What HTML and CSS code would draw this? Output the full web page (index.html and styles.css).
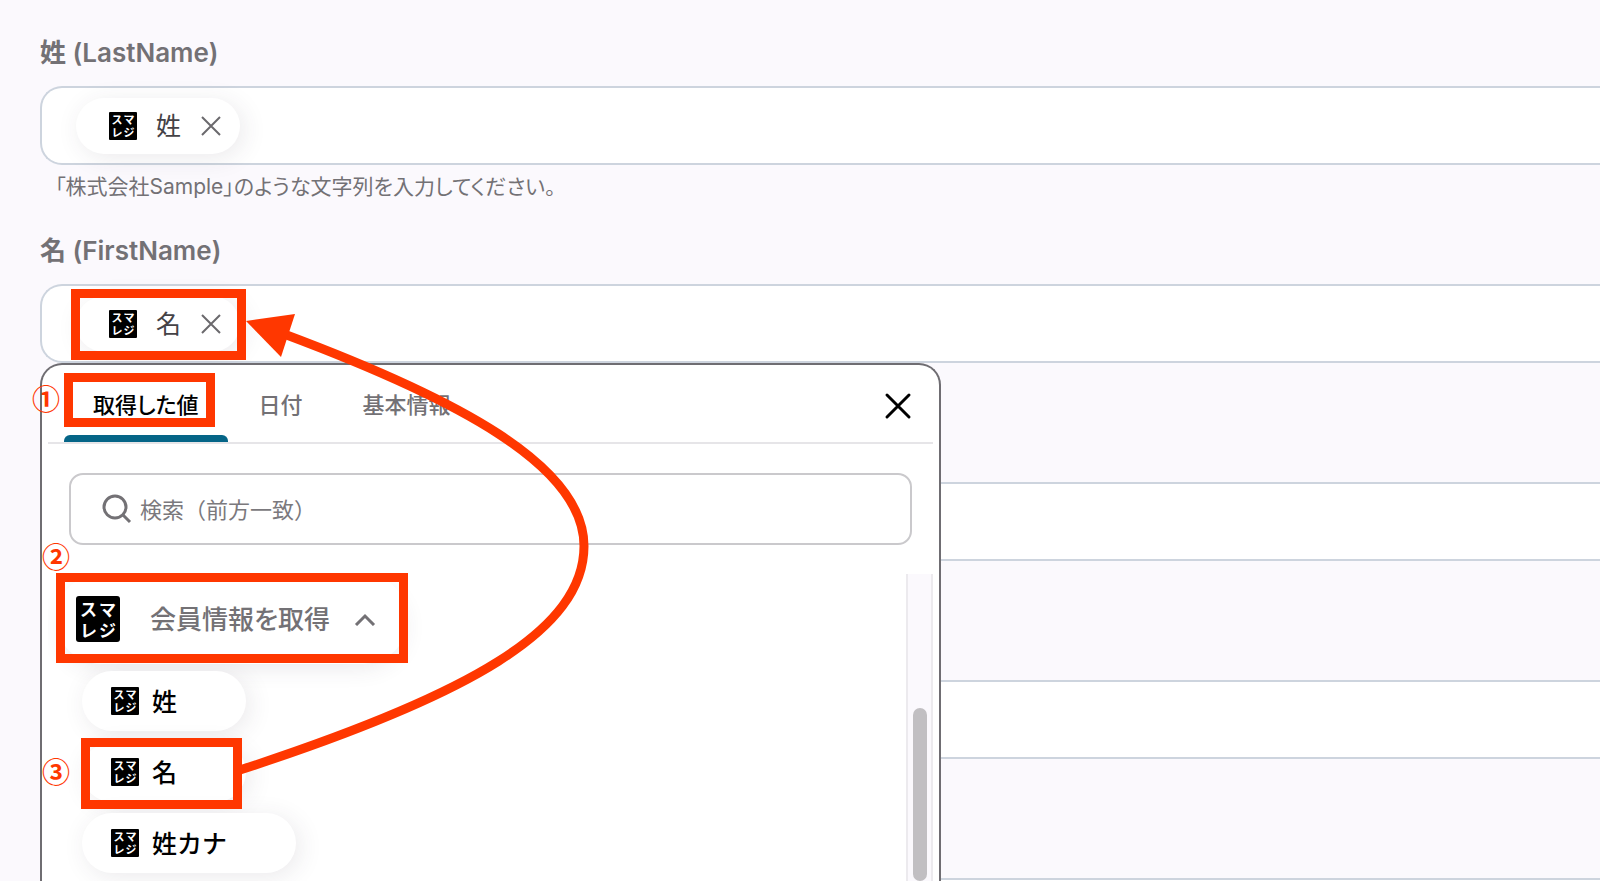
FILE: index.html
```html
<!DOCTYPE html>
<html lang="ja">
<head>
    <title>フィールド設定</title>
    <meta charset="UTF-8">
    <meta name="viewport" content="width=device-width, initial-scale=1.0" />
    <link rel="stylesheet" href="styles.css">
</head>

<body>
    <form class="form">
        <div class="field">
            <label class="field-label" for="lastName">姓 (LastName)</label>
            <div class="field-box">
                <span class="token">
                    <span class="logo"><span>ス</span><span>マ</span><span>レ</span><span>ジ</span></span>
                    <span class="token-name">姓</span>
                    <button type="button" class="token-remove" aria-label="姓を削除">
                        <svg width="22" height="22" viewBox="0 0 22 22"><path d="M2 2L20 20M20 2L2 20" /></svg>
                    </button>
                </span>
                <input class="field-input" id="lastName" type="text">
            </div>
            <p class="field-help">「株式会社Sample」のような文字列を入力してください。</p>
        </div>

        <div class="field">
            <label class="field-label" for="firstName">名 (FirstName)</label>
            <div class="field-box">
                <span class="token">
                    <span class="logo"><span>ス</span><span>マ</span><span>レ</span><span>ジ</span></span>
                    <span class="token-name">名</span>
                    <button type="button" class="token-remove" aria-label="名を削除">
                        <svg width="22" height="22" viewBox="0 0 22 22"><path d="M2 2L20 20M20 2L2 20" /></svg>
                    </button>
                </span>
                <input class="field-input" id="firstName" type="text">
            </div>

            <div class="picker">
                <div class="picker-head">
                    <div class="tabs">
                        <button type="button" class="tab tab-active">取得した値</button>
                        <button type="button" class="tab">日付</button>
                        <button type="button" class="tab">基本情報</button>
                    </div>
                    <button type="button" class="picker-close" aria-label="閉じる">
                        <svg width="28" height="28" viewBox="0 0 28 28"><path d="M3 3L25 25M25 3L3 25" /></svg>
                    </button>
                </div>
                <label class="search">
                    <svg width="30" height="30" viewBox="0 0 30 30"><circle cx="13" cy="13" r="11" /><path d="M21 21L28 28" /></svg>
                    <input class="search-input" type="text" aria-label="検索" placeholder="検索（前方一致）">
                </label>
                <div class="picker-body">
                    <div class="picker-list">
                        <button type="button" class="group">
                            <span class="logo logo-large"><span>ス</span><span>マ</span><span>レ</span><span>ジ</span></span>
                            <span class="group-name">会員情報を取得</span>
                            <svg width="22" height="14" viewBox="0 0 22 14"><path d="M2 13L11 4L20 13" /></svg>
                        </button>
                        <button type="button" class="option">
                            <span class="logo"><span>ス</span><span>マ</span><span>レ</span><span>ジ</span></span>
                            <span class="option-name">姓</span>
                        </button>
                        <button type="button" class="option">
                            <span class="logo"><span>ス</span><span>マ</span><span>レ</span><span>ジ</span></span>
                            <span class="option-name">名</span>
                        </button>
                        <button type="button" class="option">
                            <span class="logo"><span>ス</span><span>マ</span><span>レ</span><span>ジ</span></span>
                            <span class="option-name">姓カナ</span>
                        </button>
                    </div>
                    <div class="scrollbar"><div class="scrollbar-thumb"></div></div>
                </div>
            </div>
        </div>

        <div class="field field-empty">
            <div class="field-box"><input class="field-input" type="text" aria-label="項目3"></div>
        </div>
        <div class="field field-empty">
            <div class="field-box"><input class="field-input" type="text" aria-label="項目4"></div>
        </div>
        <div class="field field-empty">
            <div class="field-box"><input class="field-input" type="text" aria-label="項目5"></div>
        </div>
    </form>

    <!-- step marks drawn over the form -->
    <div class="mark mark-token"></div>
    <div class="mark mark-tab"></div>
    <div class="mark mark-group"></div>
    <div class="mark mark-option"></div>
    <span class="step step-1">①</span>
    <span class="step step-2">②</span>
    <span class="step step-3">③</span>
    <svg class="arrow" width="600" height="800" viewBox="0 0 600 800">
        <path class="arrow-line" d="M240 770C470 695 584 630 584 546C584 465 455 398 284 334" />
        <path class="arrow-head" d="M246 321L295 314L281 357Z" />
    </svg>
</body>
</html>
```

FILE: styles.css
```css
* { box-sizing: border-box; }
html, body { height: 100%; }
body { margin: 0; overflow: hidden; position: relative; font-family: Inter, 'Noto Sans CJK JP', sans-serif; color: #737175; background-color: #fbf9fd; }
button { font: inherit; color: inherit; border: 0; padding: 0; background: none; cursor: pointer; }
input { font: inherit; color: inherit; border: 0; padding: 0; background: none; outline: none; min-width: 0; }
svg { fill: none; stroke: currentColor; flex: none; display: block; }

.form { height: 100%; overflow: hidden; padding: 34px 0 0 40px; }
.field { position: relative; height: 198px; }
.field-label { display: block; height: 36px; line-height: 37px; margin-bottom: 16px; font-size: 26px; font-weight: 600; }
.field-box { display: flex; align-items: center; height: 79px; padding-left: 34px; background: #fff; border: 2px solid #cdd4de; border-right: 0; border-radius: 22px 0 0 22px; }
.field-input { flex: 1; height: 100%; font-size: 24px; }
.field-help { margin: 8px 0 0 15px; line-height: 28px; font-size: 21px; font-feature-settings: "palt"; }
.field-empty { padding-top: 52px; }

.logo { display: grid; grid-template-columns: 12px 12px; place-content: center; justify-items: center; flex: none; width: 28px; height: 28px; border-radius: 1px; background: #000; color: #fff; font-family: 'Noto Sans CJK JP', sans-serif; font-size: 11px; line-height: 13px; font-weight: 700; }
.logo-large { grid-template-columns: 19px 19px; width: 44px; height: 46px; border-radius: 3px; font-size: 17px; line-height: 21px; }

.token { display: flex; align-items: center; width: 164px; height: 56px; padding-left: 33px; border-radius: 28px; background: #fff; box-shadow: 4px 4px 24px rgba(60, 50, 70, 0.1); }
.token-name { margin: 0 19px; font-size: 25px; line-height: 36px; color: #444246; }
.token-remove { color: #6b696d; }
.token-remove svg { stroke-width: 2; }

.picker { position: absolute; top: 131px; left: 0; z-index: 1; display: flex; flex-direction: column; width: 901px; height: calc(100vh - 363px); padding: 0 6px; background: #fff; border: 2px solid #6f6d72; border-bottom: 0; border-radius: 22px 22px 0 0; }
.picker-head { display: flex; flex: none; justify-content: space-between; height: 79px; padding: 5px 21px 0 16px; border-bottom: 2px solid #e6e5e8; }
.tabs { display: flex; gap: 2px; }
.tab { position: relative; padding: 0 29px 6px; font-size: 22px; font-weight: 500; font-feature-settings: "palt"; }
.tab-active { color: #000; }
.tab-active::after { content: ""; position: absolute; left: 0; right: 0; bottom: 0; height: 7px; border-radius: 6px 6px 0 0; background: #056587; }
.picker-close { color: #000; }
.picker-close svg { stroke-width: 3; stroke-linecap: round; }
.search { display: flex; flex: none; align-items: center; gap: 8px; height: 72px; margin: 29px 21px 29px 21px; padding-left: 31px; border: 2px solid #cac9cc; border-radius: 14px; }
.search svg { stroke-width: 3; }
.search-input { flex: 1; height: 100%; padding-top: 2px; font-size: 22px; }
.search-input::placeholder { color: #7b797d; opacity: 1; }

.picker-body { display: flex; flex: 1; min-height: 0; }
.picker-list { display: flex; flex: 1; flex-direction: column; align-items: flex-start; gap: 11px; overflow: hidden; }
.group { display: flex; flex: none; align-items: center; height: 90px; width: 352px; margin: 0 0 -4px 8px; padding-left: 20px; border-radius: 45px; font-size: 26px; font-weight: 500; box-shadow: 0 8px 24px -6px rgba(60, 50, 70, 0.12); }
.group-name { margin: 0 24px 0 30px; padding-bottom: 3px; font-feature-settings: "palt"; }
.group svg { stroke-width: 3; }
.option { display: flex; flex: none; align-items: center; gap: 13px; height: 60px; margin-left: 34px; padding: 0 69px 0 29px; border-radius: 30px; background: #fff; box-shadow: 4px 4px 24px rgba(60, 50, 70, 0.1); color: #000; font-size: 25px; font-weight: 500; }
.option-name { padding-bottom: 2px; }
.scrollbar { flex: none; display: flex; flex-direction: column; width: 27px; padding: 134px 5px 0; border: 2px solid #eceaee; border-width: 0 2px; background: #fbf9fd; }
.scrollbar-thumb { flex: 1; width: 14px; border-radius: 7px; background: #c1bfc2; }

.mark { position: absolute; z-index: 2; border: 9px solid #ff3700; }
.mark-token { left: 71px; top: 289px; width: 175px; height: 71px; }
.mark-tab { left: 64px; top: 373px; width: 151px; height: 54px; }
.mark-group { left: 56px; top: 573px; width: 352px; height: 90px; }
.mark-option { left: 81px; top: 738px; width: 161px; height: 71px; }
.step { position: absolute; z-index: 2; color: #ff3700; font-family: 'Noto Sans CJK JP', sans-serif; font-size: 28px; font-weight: 700; line-height: 40px; }
.step-1 { left: 32px; top: 378px; }
.step-2 { left: 42px; top: 536px; }
.step-3 { left: 42px; top: 751px; }
.arrow { position: absolute; z-index: 2; left: 0; top: 0; pointer-events: none; }
.arrow-line { stroke: #ff3700; stroke-width: 9; }
.arrow-head { fill: #ff3700; stroke: none; }
```
